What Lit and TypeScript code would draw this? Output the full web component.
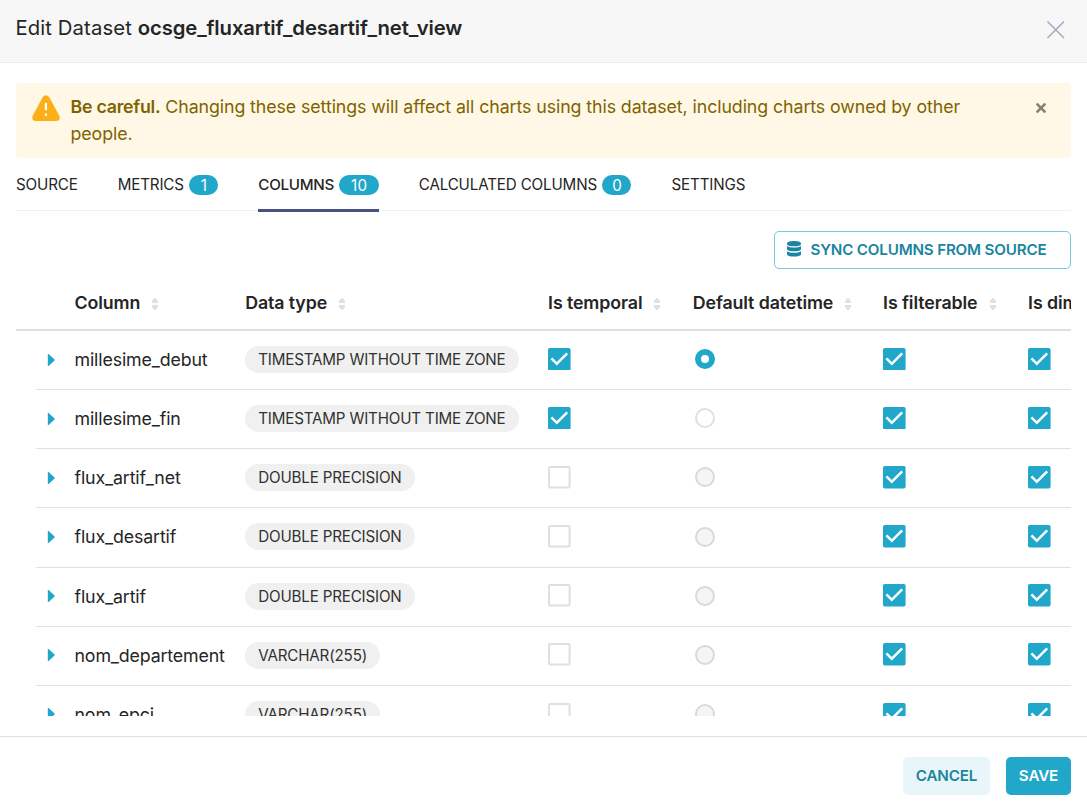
import { LitElement, html, css, svg, nothing } from "lit";
import { customElement } from "lit/decorators.js";

interface ColumnRow {
  name: string;
  type: string;
  temporal: boolean;
  datetime: "selected" | "enabled" | "disabled";
}

const ROWS: ColumnRow[] = [
  { name: "millesime_debut", type: "TIMESTAMP WITHOUT TIME ZONE", temporal: true, datetime: "selected" },
  { name: "millesime_fin", type: "TIMESTAMP WITHOUT TIME ZONE", temporal: true, datetime: "enabled" },
  { name: "flux_artif_net", type: "DOUBLE PRECISION", temporal: false, datetime: "disabled" },
  { name: "flux_desartif", type: "DOUBLE PRECISION", temporal: false, datetime: "disabled" },
  { name: "flux_artif", type: "DOUBLE PRECISION", temporal: false, datetime: "disabled" },
  { name: "nom_departement", type: "VARCHAR(255)", temporal: false, datetime: "disabled" },
  { name: "nom_epci", type: "VARCHAR(255)", temporal: false, datetime: "disabled" },
];

const TABS = [
  { label: "SOURCE" },
  { label: "METRICS", count: 1 },
  { label: "COLUMNS", count: 10, active: true },
  { label: "CALCULATED COLUMNS", count: 0 },
  { label: "SETTINGS" },
];

const HEADS = ["Column", "Data type", "Is temporal", "Default datetime", "Is filterable", "Is dimension"];

const checkbox = (on: boolean) => html`<svg class="check" viewBox="0 0 18 18">
  ${on
    ? svg`<rect width="18" height="18" rx="1.4" fill="#20a7c9"/><path d="M7 14L2 9L3.41 7.59L7 11.17L14.59 3.58L16 5L7 14Z" fill="#fff"/>`
    : svg`<rect x=".8" y=".8" width="16.4" height="16.4" rx=".8" fill="#fff" stroke="#e0e0e0" stroke-width="1.6"/>`}
</svg>`;

const sorter = html`<svg class="sorter" width="8" height="12" viewBox="0 0 8 12" fill="#e0e0e0">
  <path d="M4 0C5 0 7.2 3 7.2 4.1Q7.2 4.9 6.3 4.9H1.7Q.8 4.9 .8 4.1C.8 3 3 0 4 0Z"/>
  <path d="M4 12C5 12 7.2 9 7.2 7.9Q7.2 7.1 6.3 7.1H1.7Q.8 7.1 .8 7.9C.8 9 3 12 4 12Z"/>
</svg>`;

@customElement("app-root")
export class AppRoot extends LitElement {
  static styles = css`
    :host {
      display: flex;
      flex-direction: column;
      box-sizing: border-box;
      width: 1087px;
      height: 812px;
      overflow: hidden;
      background: #fff;
      color: #252525;
      font-family: Inter, sans-serif;
      font-size: 17.8px;
      letter-spacing: -0.14px;
    }
    * { box-sizing: border-box; }
    svg { display: block; flex: none; }
    .header {
      height: 63px;
      flex: none;
      display: flex;
      justify-content: space-between;
      padding: 16px 22px 0 15.5px;
      background: #f7f7f7;
      border-bottom: 1px solid #ececec;
      font-size: 20.3px;
      line-height: 24px;
      letter-spacing: 0.1px;
    }
    .title b { font-weight: 600; letter-spacing: -0.1px; }
    .close { margin-top: 4px; }
    .body {
      height: 653px;
      flex: none;
      margin: 0 16px;
      padding-top: 20px;
      overflow: hidden;
    }
    .alert {
      height: 75px;
      display: flex;
      padding: 10px 25px 0 16px;
      background: #fff8e6;
      border-radius: 4px;
      color: #806300;
      font-size: 17.8px;
      line-height: 27px;
      letter-spacing: -0.09px;
    }
    .alert p { margin: 0 0 0 10.5px; flex: 1; padding-right: 70px; }
    .alert b { font-weight: 600; letter-spacing: -0.26px; }
    .warn { margin-top: 2px; }
    .dismiss { margin-top: 10px; }
    .tabs {
      height: 53px;
      display: flex;
      gap: 40px;
      border-bottom: 1px solid #f0f0f0;
      font-size: 15.2px;
      letter-spacing: -0.17px;
    }
    .tab {
      display: flex;
      height: 54px;
      gap: 5.5px;
      padding-top: 16px;
      line-height: 22px;
      white-space: nowrap;
      border-bottom: 3px solid transparent;
    }
    .tab.active { font-weight: 500; border-bottom-color: #484f81; letter-spacing: -0.3px; }
    .badge {
      height: 20px;
      min-width: 29px;
      margin-top: 1px;
      padding: 0 9px;
      border-radius: 10px;
      background: #20a7c9;
      color: #fff;
      font-size: 15.2px;
      font-weight: 400;
      line-height: 21px;
      text-align: center;
      letter-spacing: 0;
    }
    .active .badge { min-width: 39.3px; letter-spacing: 0.3px; }
    .toolbar { display: flex; justify-content: flex-end; margin-top: 20px; }
    .btn {
      display: flex;
      align-items: center;
      justify-content: center;
      height: 38px;
      padding-bottom: 2px;
      border-radius: 5px;
      font-size: 15.2px;
      font-weight: 600;
      white-space: nowrap;
    }
    .sync {
      width: 297px;
      justify-content: flex-start;
      padding-left: 12px;
      gap: 9.5px;
      border: 1px solid #79cadf;
      color: #1a85a0;
      letter-spacing: -0.19px;
    }
    .row {
      display: grid;
      grid-template-columns: 38.5px 170.7px 302.9px 144.7px 190.3px 145px 160px;
      width: 1152px;
      align-items: center;
    }
    .heads {
      height: 62px;
      border-bottom: 2px solid #e0e0e0;
      font-weight: 600;
      padding-left: 20px;
      padding-top: 7px;
      letter-spacing: -0.1px;
    }
    .head { display: flex; align-items: center; gap: 11px; white-space: nowrap; }
    .sorter { margin-top: 2px; }
    .line {
      height: 59.15px;
      margin-left: 20px;
      padding-bottom: 1px;
      border-bottom: 1px solid #e0e0e0;
    }
    .caret { margin-left: 11px; }
    .pill {
      display: inline-flex;
      align-items: center;
      height: 27px;
      padding: 0 13px;
      border-radius: 14px;
      background: #f0f0f0;
      color: #323232;
      font-size: 15.2px;
      letter-spacing: -0.19px;
      white-space: nowrap;
    }
    .check { width: 22.6px; height: 22.6px; margin-bottom: 1.2px; }
    .radio {
      width: 20px;
      height: 20px;
      margin-left: 2px;
      margin-bottom: 0.8px;
      border-radius: 50%;
      border: 2px solid #e0e0e0;
      background: #fff;
    }
    .radio.disabled { background: #f5f5f5; border-color: #d9d9d9; }
    .radio.selected { border: 6px solid #20a7c9; }
    .footer {
      flex: 1;
      margin-top: 20px;
      border-top: 1px solid #e0e0e0;
      display: flex;
      justify-content: flex-end;
      gap: 16px;
      padding: 20px 16px 0 0;
    }
    .cancel { width: 87px; background: #e9f6f9; color: #1a85a0; }
    .save { width: 65px; background: #20a7c9; color: #fff; }
  `;

  render() {
    return html`
      <div class="header">
        <div class="title">Edit Dataset <b>ocsge_fluxartif_desartif_net_view</b></div>
        <svg class="close" width="19" height="19" viewBox="0 0 19 19" stroke="#a8abc0" stroke-width="1.6">
          <path d="M1.5 1.5L18 18M18 1.5L1.5 18" />
        </svg>
      </div>
      <div class="body">
        <div class="alert">
          <svg class="warn" width="28" height="27" viewBox="0 0 28 27">
            <path d="M10.7 2.2Q14-1.8 17.3 2.2L27.3 20.8Q28.8 26 24 26H4Q-.8 26 .7 20.8Z" fill="#fcaf17" />
            <path d="M13.9 9V14.4M13.9 19.3V19.9" stroke="#fff" stroke-width="2.3" stroke-linecap="round" />
          </svg>
          <p><b>Be careful.</b> Changing these settings will affect all charts using this dataset, including charts owned by other people.</p>
          <svg class="dismiss" width="10" height="10" viewBox="0 0 10 10" stroke="#85816f" stroke-width="2.6">
            <path d="M.6 .6L9.4 9.4M9.4 .6L.6 9.4" />
          </svg>
        </div>
        <div class="tabs">
          ${TABS.map(
            (t) => html`<div class="tab ${t.active ? "active" : ""}">
              <span>${t.label}</span>${t.count === undefined ? nothing : html`<span class="badge">${t.count}</span>`}
            </div>`
          )}
        </div>
        <div class="toolbar">
          <div class="btn sync">
            <svg width="14" height="16" viewBox="0 0 14 16" fill="#1a85a0">
              <path d="M0 2.6C0 .9 3 0 7 0S14 .9 14 2.6V3C14 4.6 11 5.3 7 5.3S0 4.6 0 3Z" />
              <path d="M0 5.1C1.7 6.3 4.2 6.6 7 6.6S12.3 6.3 14 5.1V8C14 9.5 11 10.3 7 10.3S0 9.5 0 8Z" />
              <path d="M0 10.2C1.7 11.4 4.2 11.7 7 11.7S12.3 11.4 14 10.2V13C14 14.8 11 15.6 7 15.6S0 14.8 0 13Z" />
            </svg>
            <span>SYNC COLUMNS FROM SOURCE</span>
          </div>
        </div>
        <div class="row heads">
          <span></span>
          ${HEADS.map((h) => html`<div class="head"><span>${h}</span>${sorter}</div>`)}
        </div>
        ${ROWS.map(
          (r) => html`<div class="row line">
            <svg class="caret" width="8" height="12" viewBox="0 0 8 12" fill="#20a7c9">
              <path d="M.8 0H1.6L7.6 5.4V6.6L1.6 12H.8Z" />
            </svg>
            <span class="name">${r.name}</span>
            <div><span class="pill">${r.type}</span></div>
            ${checkbox(r.temporal)}
            <div class="radio ${r.datetime}"></div>
            ${checkbox(true)} ${checkbox(true)}
          </div>`
        )}
      </div>
      <div class="footer">
        <div class="btn cancel">CANCEL</div>
        <div class="btn save">SAVE</div>
      </div>
    `;
  }
}
